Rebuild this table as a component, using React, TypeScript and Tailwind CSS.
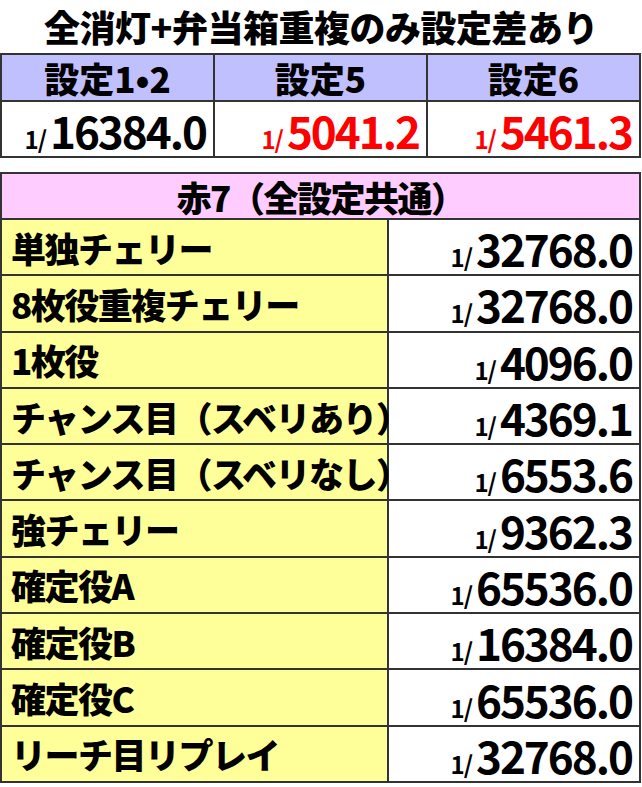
import React from "react";

const jp = { fontFamily: '"Noto Sans CJK JP", "Noto Sans", sans-serif' };

function Num({ v, red }: { v: string; red?: boolean }) {
  return (
    <span className={`inline-flex items-baseline leading-none ${red ? "text-[#ff0000]" : "text-black"}`}>
      <span className="text-[24px] font-bold tracking-[-1px] mr-[4px] leading-none">1/</span>
      <span className="text-[44px] font-bold tracking-[-2px] leading-none inline-block">{v}</span>
    </span>
  );
}

const rows: [string, string][] = [
  ["単独チェリー", "32768.0"],
  ["8枚役重複チェリー", "32768.0"],
  ["1枚役", "4096.0"],
  ["チャンス目（スベリあり）", "4369.1"],
  ["チャンス目（スベリなし）", "6553.6"],
  ["強チェリー", "9362.3"],
  ["確定役A", "65536.0"],
  ["確定役B", "16384.0"],
  ["確定役C", "65536.0"],
  ["リーチ目リプレイ", "32768.0"],
];

export default function App() {
  return (
    <div className="w-[642px] h-[787px] bg-white" style={jp}>
      <div className="h-[53px] flex items-center justify-center text-[36px] font-black tracking-[-0.5px] text-black leading-[1.3]">
        全消灯+弁当箱重複のみ設定差あり
      </div>
      <div className="w-[641px] grid grid-cols-3 gap-[2px] p-[2px] bg-[#333]">
        {["設定1•2", "設定5", "設定6"].map((h) => (
          <div key={h} className="h-[45px] bg-[#c0c0ff] flex items-center justify-center text-[35px] font-black leading-none">
            {h}
          </div>
        ))}
        <div className="h-[54px] bg-white flex items-center justify-end pr-[7px] pt-[2px]">
          <Num v="16384.0" />
        </div>
        <div className="h-[54px] bg-white flex items-center justify-end pr-[7px] pt-[2px]">
          <Num v="5041.2" red />
        </div>
        <div className="h-[54px] bg-white flex items-center justify-end pr-[7px] pt-[2px]">
          <Num v="5461.3" red />
        </div>
      </div>
      <div className="h-[14px]" />
      <div className="w-[641px] grid grid-cols-[385px_1fr] gap-[2px] p-[2px] bg-[#333]">
        <div className="col-span-2 h-[44px] bg-[#ffccff] flex items-center justify-center text-[35px] font-black leading-none tracking-[-1.5px]">
          赤7（全設定共通）
        </div>
        {rows.map(([l, v]) => (
          <React.Fragment key={l}>
            <div className="h-[54.3px] bg-[#ffff99] flex items-center pl-[9px] text-[35px] font-black leading-none tracking-[-1.5px] whitespace-nowrap">
              {l}
            </div>
            <div className="h-[54.3px] bg-white flex items-center justify-end pr-[7px] pt-[2px]">
              <Num v={v} />
            </div>
          </React.Fragment>
        ))}
      </div>
    </div>
  );
}
